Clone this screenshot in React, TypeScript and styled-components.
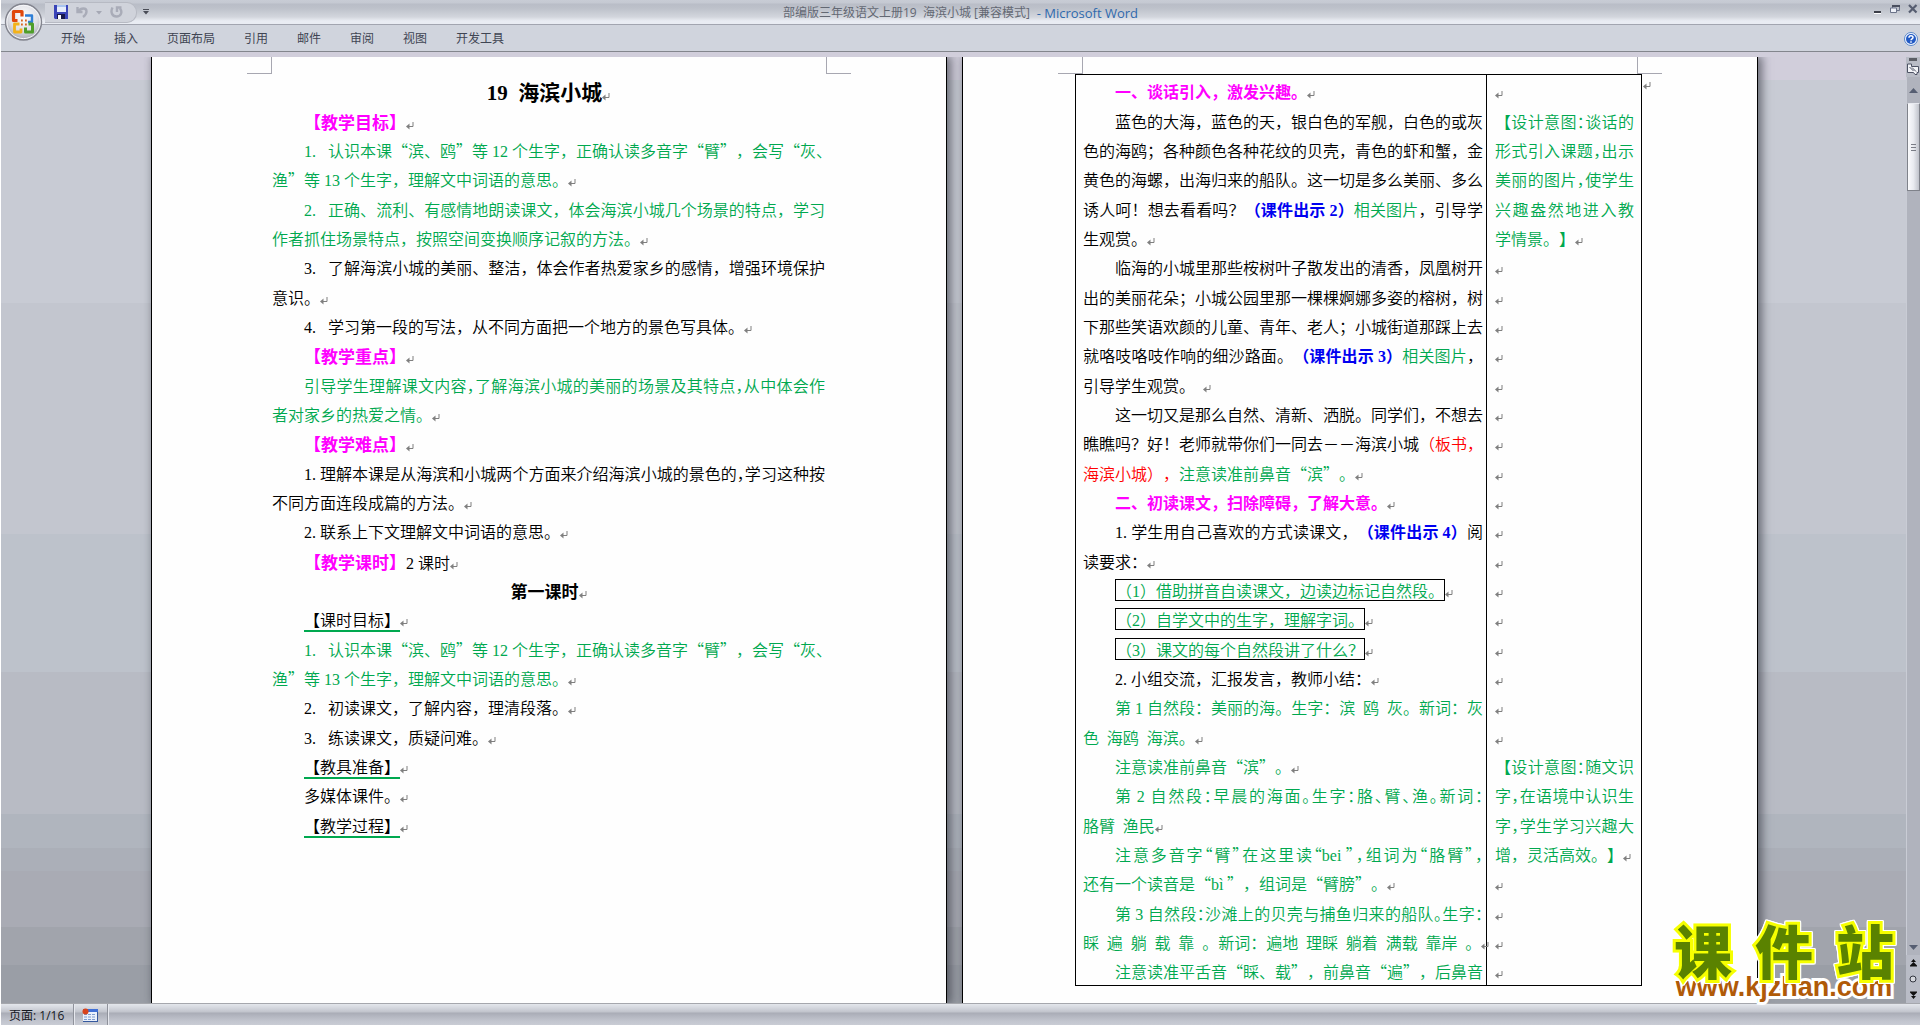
import React from "react";
import styled, { createGlobalStyle, css } from "styled-components";

const UI_FONT = '"Open Sans", "Noto Sans CJK SC", sans-serif';
const DOC_FONT = '"Noto Sans CJK SC DemiLight", "Noto Sans CJK SC Light", "Noto Sans CJK SC", sans-serif';

const GlobalStyle = createGlobalStyle`
  * { box-sizing: border-box; }
  body { margin: 0; background: #fff; }
  button { font: inherit; color: inherit; border: 0; padding: 0; background: none; cursor: pointer; }
`;

/* ---------- window frame ---------- */

const Window = styled.div`
  display: flex;
  flex-direction: column;
  min-height: 100vh;
  padding-left: 1px;
  font-family: ${UI_FONT};
  font-size: 12px;
  color: #3f4553;
`;

const TitleBar = styled.header`
  position: relative;
  display: grid;
  grid-template-columns: 1fr auto 1fr;
  align-items: center;
  height: 25px;
  padding: 0 2px;
  border-bottom: 1px solid #a2a5b0;
  background: linear-gradient(#c8ccd5 0, #c5c9d2 3px, #b9bdc7 4px, #bdc1ca 8px, #c6cad2 12px, #d3d6dd 17px, #dfe2e8 19px, #e9ecf3 21px, #e9ecf3 24px);
`;

const OfficeButton = styled.button`
  position: absolute;
  left: 3px;
  top: 2px;
  width: 39px;
  height: 40px;
  z-index: 2;
`;

const QuickAccess = styled.div`
  display: flex;
  align-items: center;
  gap: 8px;
  height: 21px;
  padding: 0 13px 0 9px;
  border-radius: 0 10px 10px 0;
  border: 1px solid #b7bac3;
  border-left: 0;
  background: #d0d3db;
`;

const BarGroup = styled.div`
  display: flex;
  align-items: center;
  gap: 6px;
  padding-left: 42px;
`;

const IconButton = styled.button`
  display: flex;
  align-items: center;
  justify-content: center;
`;

const DocTitle = styled.h1`
  display: flex;
  align-items: center;
  margin: 0;
  padding-top: 1px;
  font-size: 12px;
  font-weight: 400;
  line-height: 20px;
  white-space: pre;
  color: #636873;
`;

const AppName = styled.span`
  font-size: 13px;
  color: #2f69ad;
`;

const WindowControls = styled.div`
  display: flex;
  justify-content: flex-end;
  align-items: center;
  gap: 8px;
  padding-bottom: 6px;
`;

const Ribbon = styled.nav`
  display: flex;
  align-items: center;
  gap: 29px;
  height: 27px;
  padding: 1px 2px 0 60px;
  border-bottom: 1px solid #83868d;
  background: #d0d4dd;
`;

const Tab = styled.button`
  line-height: 24px;
  white-space: nowrap;
`;

const HelpButton = styled(IconButton)`
  margin-left: auto;
`;

const Strip = styled.div`
  height: 5px;
  background: #d1cedb;
`;

/* ---------- workspace ---------- */

const Workspace = styled.main`
  display: flex;
  flex: 1;
  background: linear-gradient(
    #d1cedb 2.4%, #c8cbd4 2.4% 26%, #c3c6cf 26% 50.4%, #bdc2cb 50.4% 65%,
    #b8bbc4 65% 80%, #b0b5be 80% 83.6%, #abafb8 83.6% 86%, #a9abb4 86% 92%,
    #a1a4ac 92% 96%, #9a9ea6 96%
  );
`;

const Pages = styled.div`
  display: flex;
  flex: 1;
  justify-content: center;
  gap: 15px;
  padding-left: 2px;
  overflow: hidden;
`;

const Page = styled.section`
  width: 796px;
  flex: none;
  background: #fefefe;
  border: solid #000;
  border-width: 0 1px;
  box-shadow: 3px 0 9px 1px rgba(40, 44, 54, 0.6);
`;

const Corners = styled.div`
  display: flex;
  justify-content: space-between;
  padding: 0 95px;
`;

const Corner = styled.span<{ $side: "left" | "right" }>`
  width: 25px;
  height: 17px;
  border: 0 solid #a7a7b1;
  border-bottom-width: 1px;
  ${(p) => (p.$side === "left" ? "border-right-width: 1px;" : "border-left-width: 1px;")}
`;

const Body = styled.div`
  padding: 1px 121px 0 120px;
`;

const tones = {
  black: "#000",
  green: "#00a84f",
  pink: "#ff00ff",
  blue: "#0000f0",
  red: "#ff0000",
};
type Tone = keyof typeof tones;

const Lines = styled.div`
  font-family: ${DOC_FONT};
  font-size: 16px;
  text-spacing-trim: space-all;
`;

const Line = styled.p<{ $indent?: boolean; $full?: boolean; $tight?: boolean; $center?: boolean }>`
  margin: 0;
  height: 29px;
  line-height: 33px;
  white-space: nowrap;
  padding-left: ${(p) => (p.$indent ? "32px" : "0")};
  ${(p) => p.$full && css`text-align: justify; text-align-last: justify;`}
  ${(p) => p.$tight && css`font-feature-settings: "halt";`}
  ${(p) => p.$center && css`text-align: center;`}
  &:nth-child(3n + 1) {
    height: 30px;
  }
`;

type RunProps = { $tone: Tone; $bold?: boolean; $size?: number; $underline?: boolean; $boxed?: boolean; $tight?: boolean };

const Run = styled.span<RunProps>`
  color: ${(p) => tones[p.$tone]};
  font-weight: ${(p) => (p.$bold ? 700 : 400)};
  ${(p) => p.$bold && css`font-family: "Noto Sans CJK SC", sans-serif;`}
  ${(p) => p.$size && css`font-size: ${p.$size}px;`}
  ${(p) => p.$tight && css`font-feature-settings: "halt";`}
  ${(p) => p.$underline && css`
    text-decoration: underline 2px #00a84f;
    text-underline-offset: 4px;
  `}
  ${(p) => p.$boxed && css`
    display: inline-block;
    height: 22px;
    line-height: 20px;
    border: 1px solid #000;
  `}
`;

const Latin = styled.span<{ $before: boolean; $after: boolean; $chars: number }>`
  display: inline-block;
  min-width: ${(p) => p.$chars / 2}em;
  margin: 0 ${(p) => (p.$after ? 4 : 0)}px 0 ${(p) => (p.$before ? 4 : 0)}px;
  font-family: "Liberation Serif", serif;
  line-height: 20px;
  text-align: left;
  text-align-last: left;
`;

const Space = styled.span`
  font-family: "Liberation Mono", monospace;
  font-size: 13px;
  white-space: pre;
`;

const MarkIcon = styled.svg`
  width: 8px;
  height: 8px;
  vertical-align: -1px;
`;

const DocTable = styled.table`
  flex: none;
  width: 567px;
  margin-left: -8px;
  border-collapse: collapse;
  table-layout: fixed;
  td {
    border: 1px solid #000;
    padding: 0 3px 0 7px;
    vertical-align: top;
  }
  td + td {
    width: 155px;
    padding-right: 7px;
    padding-left: 8px;
  }
`;

const TableRow = styled.div`
  display: flex;
  align-items: flex-start;
  gap: 1px;
`;

const RowEnd = styled.span`
  padding-top: 2px;
`;

const TableBody = styled(Body)`
  padding: 0 0 0 120px;
`;

/* ---------- scroll bar ---------- */

const ScrollColumn = styled.aside`
  display: flex;
  flex-direction: column;
  align-items: center;
  width: 14px;
  background: #b9bcc6;
`;

const ScrollTrack = styled.div`
  display: flex;
  flex-direction: column;
  align-items: center;
  align-self: stretch;
  flex: 1;
  background: #b0b3bd;
  border-left: 1px solid #c9ccd5;
`;

const Thumb = styled.div`
  display: flex;
  flex-direction: column;
  justify-content: center;
  gap: 2px;
  width: 13px;
  height: 88px;
  margin-bottom: auto;
  padding: 0 3px;
  border: 1px solid #7f828a;
  border-top-color: #e8eaf0;
  background: linear-gradient(90deg, #fbfbfd, #e9ebf0 50%, #c0c3cb);
`;

const Grip = styled.span`
  height: 1px;
  background: #7a7d86;
`;

const ScrollButton = styled(IconButton)<{ $h: number }>`
  width: 13px;
  height: ${(p) => p.$h}px;
`;

/* ---------- status bar ---------- */

const StatusBar = styled.footer`
  display: flex;
  align-items: stretch;
  height: 22px;
  border-top: 1px solid #a5a7ad;
  background: linear-gradient(#e3e6eb 0, #d3d6dd 4px, #c1c4cc 8px, #a9acb6 9px, #b3b6c0 12px, #c2c5ce 17px, #c9ccd4 21px);
  color: #15181f;
`;

const StatusItem = styled.button`
  display: flex;
  align-items: center;
  padding: 0 9px 0 8px;
  border-right: 1px solid #8f929b;
  box-shadow: 1px 0 #e6e8ee;
`;

const Watermark = styled.div`
  position: absolute;
  right: 20px;
  bottom: 26px;
  width: 232px;
  text-align: center;
  white-space: nowrap;
`;

const WatermarkName = styled.div`
  display: flex;
  justify-content: space-between;
  padding: 0 6px;
  font: 900 58px/54px "Noto Sans CJK SC", sans-serif;
  color: #5a8200;
  -webkit-text-stroke: 6px #f6ff00;
  paint-order: stroke fill;
  filter: drop-shadow(1px 0 #fff) drop-shadow(-1px 0 #fff) drop-shadow(0 1px #fff) drop-shadow(0 -1px #fff);
`;

const WatermarkLink = styled.a`
  display: block;
  font: 700 27px/23px "Liberation Sans", Arial, sans-serif;
  color: #b05a08;
  text-decoration: none;
  -webkit-text-stroke: 6px #fff;
  paint-order: stroke fill;
`;

/* ---------- document text ---------- */

type Piece = { t: string; tone?: Tone; bold?: boolean; size?: number; underline?: boolean; boxed?: boolean; tight?: boolean };
type LineData = { p: Piece[]; indent?: boolean; full?: boolean; tight?: boolean; center?: boolean; mark?: boolean };
type Options = Omit<LineData, "p">;

const IN = { indent: true };
const INF = { indent: true, full: true };
const INT = { indent: true, full: true, tight: true };
const F = { full: true };
const FT = { full: true, tight: true };
const END = { mark: true };
const INE = { indent: true, mark: true };

const line = (p: Piece[], o: Options = {}): LineData => ({ p, ...o });
const black = (t: string, o?: Options) => line([{ t }], o);
const green = (t: string, o?: Options) => line([{ t, tone: "green" }], o);
const heading = (t: string, size?: number) => line([{ t, tone: "pink", bold: true, size }], INE);
const section = (t: string) => line([{ t, underline: true }], INE);
const boxed = (t: string) => line([{ t, tone: "green", boxed: true }], INE);
const note = (rest: string) =>
  line([{ t: "【设计意图", tone: "green" }, { t: "：", tone: "green", tight: true }, { t: rest, tone: "green" }], F);

const firstPage: LineData[] = [
  line([{ t: "19 海滨小城", bold: true, size: 21 }], { center: true, mark: true }),
  heading("【教学目标】", 17),
  green("1. 认识本课“滨、鸥”等12个生字，正确认读多音字“臂”，会写“灰、", IN),
  green("渔”等13个生字，理解文中词语的意思。", END),
  green("2. 正确、流利、有感情地朗读课文，体会海滨小城几个场景的特点，学习", INF),
  green("作者抓住场景特点，按照空间变换顺序记叙的方法。", END),
  black("3. 了解海滨小城的美丽、整洁，体会作者热爱家乡的感情，增强环境保护", INF),
  black("意识。", END),
  black("4. 学习第一段的写法，从不同方面把一个地方的景色写具体。", INE),
  heading("【教学重点】", 17),
  green("引导学生理解课文内容，了解海滨小城的美丽的场景及其特点，从中体会作", INT),
  green("者对家乡的热爱之情。", END),
  heading("【教学难点】", 17),
  black("1.理解本课是从海滨和小城两个方面来介绍海滨小城的景色的，学习这种按", INT),
  black("不同方面连段成篇的方法。", END),
  black("2.联系上下文理解文中词语的意思。", INE),
  line([{ t: "【教学课时】", tone: "pink", bold: true, size: 17 }, { t: "2课时" }], INE),
  line([{ t: "第一课时", bold: true, size: 17 }], { center: true, mark: true }),
  section("【课时目标】"),
  green("1. 认识本课“滨、鸥”等12个生字，正确认读多音字“臂”，会写“灰、", IN),
  green("渔”等13个生字，理解文中词语的意思。", END),
  black("2. 初读课文，了解内容，理清段落。", INE),
  black("3. 练读课文，质疑问难。", INE),
  section("【教具准备】"),
  black("多媒体课件。", INE),
  section("【教学过程】"),
];

const secondPage: LineData[] = [
  heading("一、谈话引入，激发兴趣。"),
  black("蓝色的大海，蓝色的天，银白色的军舰，白色的或灰", INF),
  black("色的海鸥；各种颜色各种花纹的贝壳，青色的虾和蟹，金", F),
  black("黄色的海螺，出海归来的船队。这一切是多么美丽、多么", F),
  line([{ t: "诱人呵！想去看看吗？" }, { t: "（课件出示2）", tone: "blue", bold: true }, { t: "相关图片", tone: "green" }, { t: "，引导学" }], F),
  black("生观赏。", END),
  black("临海的小城里那些桉树叶子散发出的清香，凤凰树开", INF),
  black("出的美丽花朵；小城公园里那一棵棵婀娜多姿的榕树，树", F),
  black("下那些笑语欢颜的儿童、青年、老人；小城街道那踩上去", F),
  line([{ t: "就咯吱咯吱作响的细沙路面。" }, { t: "（课件出示3）", tone: "blue", bold: true }, { t: "相关图片", tone: "green" }, { t: "，" }], F),
  black("引导学生观赏。 ", END),
  black("这一切又是那么自然、清新、洒脱。同学们，不想去", INF),
  line([{ t: "瞧瞧吗？好！老师就带你们一同去－－海滨小城" }, { t: "（板书，", tone: "red" }], F),
  line([{ t: "海滨小城），", tone: "red" }, { t: "注意读准前鼻音“滨”。", tone: "green" }], END),
  heading("二、初读课文，扫除障碍，了解大意。"),
  line([{ t: "1.学生用自己喜欢的方式读课文，" }, { t: "（课件出示4）", tone: "blue", bold: true }, { t: "阅" }], INF),
  black("读要求：", END),
  boxed("（1）借助拼音自读课文，边读边标记自然段。"),
  boxed("（2）自学文中的生字，理解字词。"),
  boxed("（3）课文的每个自然段讲了什么？"),
  black("2.小组交流，汇报发言，教师小结：", INE),
  green("第1自然段：美丽的海。生字：滨 鸥 灰。新词：灰", INF),
  green("色 海鸥 海滨。", END),
  green("注意读准前鼻音“滨”。", INE),
  green("第2自然段：早晨的海面。生字：胳、臂、渔。新词：", INT),
  green("胳臂 渔民", END),
  green("注意多音字“臂”在这里读“bei”，组词为“胳臂”，", INT),
  green("还有一个读音是“bì”，组词是“臂膀”。", END),
  green("第3自然段：沙滩上的贝壳与捕鱼归来的船队。生字：", INT),
  green("睬 遍 躺 载 靠 。新词：遍地 理睬 躺着 满载 靠岸 。", END),
  green("注意读准平舌音“睬、载”，前鼻音“遍”，后鼻音", INF),
];

const blank = (n: number): LineData[] => Array.from({ length: n }, () => line([], END));

const notes: LineData[] = [
  ...blank(1),
  note("谈话的"),
  green("形式引入课题，出示", FT),
  green("美丽的图片，使学生", FT),
  green("兴趣盎然地进入教", F),
  green("学情景。】", END),
  ...blank(17),
  note("随文识"),
  green("字，在语境中认识生", FT),
  green("字，学生学习兴趣大", FT),
  green("增，灵活高效。】", END),
  ...blank(4),
];

const Mark = () => (
  <MarkIcon viewBox="0 0 8 8" aria-hidden="true">
    <path d="M7 0v4.5H2" fill="none" stroke="#7f7f7f" />
    <path d="M0 4.5 3.5 1.5v6z" fill="#7f7f7f" />
  </MarkIcon>
);

const isIdeograph = (c?: string) => !!c && /[\u4e00-\u9fff]/.test(c);

/* Splits a run into ideographs, half-width text and half-width spaces. */
function renderText(text: string) {
  const parts = text.split(/(\d\d? (?=海)|\d\. |[0-9A-Za-zì.]+| )/);
  return parts.map((part, i) => {
    if (!part) return null;
    if (part === " ") return <Space key={i}> </Space>;
    if (/^[0-9A-Za-zì.]/.test(part)) {
      const closed = /[. ]/.test(part);
      return (
        <Latin
          key={i}
          $chars={part.length}
          $before={isIdeograph(parts[i - 1]?.slice(-1))}
          $after={!closed && isIdeograph(parts[i + 1]?.[0])}
        >
          {part}
        </Latin>
      );
    }
    return <React.Fragment key={i}>{part}</React.Fragment>;
  });
}

const TextLines = ({ data }: { data: LineData[] }) => (
  <Lines>
    {data.map((l, i) => (
      <Line key={i} $indent={l.indent} $full={l.full} $tight={l.tight} $center={l.center}>
        {l.p.map((r, j) => (
          <Run
            key={j}
            $tone={r.tone ?? "black"}
            $bold={r.bold}
            $size={r.size}
            $underline={r.underline}
            $boxed={r.boxed}
            $tight={r.tight}
          >
            {renderText(r.t)}
          </Run>
        ))}
        {l.mark && <Mark />}
      </Line>
    ))}
  </Lines>
);

/* ---------- icons ---------- */

const OfficeLogo = () => (
  <svg width="39" height="40" viewBox="0 0 39 40" aria-hidden="true">
    <defs>
      <radialGradient id="orb" cx="0.5" cy="0.35" r="0.65">
        <stop offset="0" stopColor="#fff" />
        <stop offset="0.6" stopColor="#dfe0e6" />
        <stop offset="1" stopColor="#a4a6b0" />
      </radialGradient>
    </defs>
    <circle cx="19.5" cy="20" r="18" fill="url(#orb)" stroke="#83858f" strokeWidth="1.4" />
    <circle cx="19.5" cy="20" r="16.6" fill="none" stroke="#f6f7fa" strokeWidth="1" />
    <g fill="none" strokeLinejoin="round">
      <path d="M13.5 18.5H9.5V9.5h8.500v5" stroke="#e0480c" strokeWidth="3.200" />
      <path d="M21 13.500h7v6.500h-4" stroke="#2f7fd6" strokeWidth="2.400" />
      <path d="M15.500 22h-5v8h6.500v-3.500" stroke="#f3b21a" strokeWidth="2.800" />
      <path d="M24.500 22h4v8h-7v-4.500" stroke="#4f9e2a" strokeWidth="3" />
    </g>
    <path d="M17 18.500h1.800M21 18.500h1.800M17 22.500h1.800M21 22.500h1.800" stroke="#d8641c" strokeWidth="1.800" />
  </svg>
);

const SaveIcon = () => (
  <svg width="14" height="14" viewBox="0 0 14 14" aria-hidden="true">
    <path d="M0 0h14v14H1L0 13z" fill="#3a44b8" />
    <path d="M3 0h9v7H3z" fill="#e6edfb" />
    <path d="M3 0h9v2H3z" fill="#a9c4ef" />
    <path d="M3 9h8v5H3z" fill="#17184a" />
    <path d="M4 10h3v4H4z" fill="#fff" />
  </svg>
);

const UndoIcon = () => (
  <svg width="12" height="12" viewBox="0 0 12 12" aria-hidden="true">
    <path d="M1.500 1v5h5M2 5.500C5 1.500 10.500 1.500 10.500 5.500c0 2.500-1.500 4-3.500 5.500" fill="none" stroke="#a9acb8" strokeWidth="2.400" />
  </svg>
);

const RedoIcon = () => (
  <svg width="13" height="12" viewBox="0 0 13 12" aria-hidden="true">
    <path d="M2.500 1.500C0 6.500 2.500 10.500 6.500 10.500s6.500-4 3.500-8M11.500 1.500H7v4.500" fill="none" stroke="#a9acb8" strokeWidth="2.400" />
  </svg>
);

const Down = ({ color = "#4a4d57", bar = false }: { color?: string; bar?: boolean }) => (
  <svg width="6" height="6" viewBox="0 0 6 6" aria-hidden="true">
    {bar && <path d="M0 0h6v1H0z" fill={color} />}
    <path d="M0 2h6L3 5.500z" fill={color} />
  </svg>
);

const Chevron = ({ up = false }: { up?: boolean }) => (
  <svg width="9" height="5" viewBox="0 0 9 5" aria-hidden="true">
    <path d={up ? "M0 5 4.500 0 9 5z" : "M0 0 4.500 5 9 0z"} fill="#565e72" />
  </svg>
);

const DoubleArrow = ({ up = false }: { up?: boolean }) => (
  <svg width="7" height="8" viewBox="0 0 7 8" aria-hidden="true">
    <path
      d={up ? "M1 3 3.500 0 6 3zM0 6.500 3.500 3 7 6.500zM0 6.500h7v1H0z" : "M1 5 3.500 8 6 5zM0 1.500 3.500 5 7 1.500zM0 .5h7v1H0z"}
      fill="#111"
    />
  </svg>
);

export default function App() {
  return (
    <Window>
      <GlobalStyle />
      <TitleBar>
        <OfficeButton aria-label="Office">
          <OfficeLogo />
        </OfficeButton>
        <BarGroup>
          <QuickAccess>
            <IconButton aria-label="保存"><SaveIcon /></IconButton>
            <IconButton aria-label="撤消"><UndoIcon /></IconButton>
            <IconButton aria-label="撤消列表"><Down color="#a5a8b4" /></IconButton>
            <IconButton aria-label="重复"><RedoIcon /></IconButton>
          </QuickAccess>
          <IconButton aria-label="自定义快速访问工具栏"><Down bar /></IconButton>
        </BarGroup>
        <DocTitle>
          部编版三年级语文上册19  海滨小城 [兼容模式]<AppName>  - Microsoft Word</AppName>
        </DocTitle>
        <WindowControls>
          <IconButton aria-label="最小化">
            <svg width="8" height="10" viewBox="0 0 8 10"><path d="M0 7h7v2H0z" fill="#3c3f49" /><path d="M0 9h7v1H0z" fill="#fff" /></svg>
          </IconButton>
          <IconButton aria-label="还原">
            <svg width="10" height="9" viewBox="0 0 10 9">
              <path d="M2.500 1h7v4.500h-7z" fill="none" stroke="#6b7389" />
              <path d="M2 0h8v2H2z" fill="#4a4f5f" />
              <path d="M.5 3h6v4.500h-6z" fill="#eef1f8" stroke="#6b7389" />
            </svg>
          </IconButton>
          <IconButton aria-label="关闭">
            <svg width="10" height="10" viewBox="0 0 10 10"><path d="M1 1l7.500 7.500M8.500 1 1 8.500" stroke="#565d70" strokeWidth="2.200" /></svg>
          </IconButton>
        </WindowControls>
      </TitleBar>

      <Ribbon aria-label="功能区">
        {["开始", "插入", "页面布局", "引用", "邮件", "审阅", "视图", "开发工具"].map((t) => (
          <Tab key={t}>{t}</Tab>
        ))}
        <HelpButton aria-label="帮助">
          <svg width="14" height="14" viewBox="0 0 14 14">
            <circle cx="7" cy="7" r="6.500" fill="#f4f8ff" stroke="#5a86c8" />
            <circle cx="7" cy="7" r="5" fill="#2159c4" />
            <path d="M5 5.700C5 3.200 9 3.200 9 5.500 9 7 7 6.800 7 8.300M7 9.200v1.500" fill="none" stroke="#fff" strokeWidth="1.500" />
          </svg>
        </HelpButton>
      </Ribbon>
      <Strip />

      <Workspace>
        <Pages>
          <Page>
            <Corners><Corner $side="left" /><Corner $side="right" /></Corners>
            <Body><TextLines data={firstPage} /></Body>
          </Page>
          <Page>
            <Corners><Corner $side="left" /><Corner $side="right" /></Corners>
            <TableBody>
              <TableRow>
                <DocTable>
                  <colgroup>
                    <col />
                    <col width="155" />
                  </colgroup>
                  <tbody>
                    <tr>
                      <td><TextLines data={secondPage} /></td>
                      <td><TextLines data={notes} /></td>
                    </tr>
                  </tbody>
                </DocTable>
                <RowEnd><Mark /></RowEnd>
              </TableRow>
            </TableBody>
          </Page>
        </Pages>
        <ScrollColumn>
          <ScrollButton $h={4} aria-label="拆分">
            <svg width="8" height="3"><path d="M0 0h8v3H0z" fill="#5c5e66" /></svg>
          </ScrollButton>
          <ScrollButton $h={16} aria-label="标尺">
            <svg width="12" height="12" viewBox="0 0 12 12">
              <path d="M.5 3V1h4v2.500h7v6H10v2H8l-1.500-2h-6z" fill="#f3f4f8" stroke="#4d5264" />
              <path d="m2.500 4 4 4M5 4.500l4 4" stroke="#4d5264" />
            </svg>
          </ScrollButton>
          <ScrollTrack>
            <ScrollButton $h={26} aria-label="向上滚动"><Chevron up /></ScrollButton>
            <Thumb><Grip /><Grip /><Grip /></Thumb>
            <ScrollButton $h={16} aria-label="向下滚动"><Chevron /></ScrollButton>
          </ScrollTrack>
          <ScrollButton $h={16} aria-label="前一页"><DoubleArrow up /></ScrollButton>
          <ScrollButton $h={16} aria-label="选择浏览对象">
            <svg width="8" height="8"><circle cx="4" cy="4" r="3" fill="#d5d7dd" stroke="#33363f" /></svg>
          </ScrollButton>
          <ScrollButton $h={16} aria-label="下一页"><DoubleArrow /></ScrollButton>
        </ScrollColumn>
      </Workspace>

      <StatusBar>
        <StatusItem>页面: 1/16</StatusItem>
        <StatusItem aria-label="宏">
          <svg width="16" height="14" viewBox="0 0 16 14">
            <path d="M1 1h15v13H1z" fill="#e9f0fb" />
            <path d="M1 1h15v3H1z" fill="#3f6fd6" />
            <path d="M2 6.500h12M2 9h12M2 11.500h12" stroke="#7e9cd0" strokeDasharray="3 1" />
            <path d="M15 4h1v10H1v-1h14z" fill="#35589e" />
            <circle cx="3.500" cy="3.500" r="3" fill="#d8431c" />
          </svg>
        </StatusItem>
      </StatusBar>

      <Watermark>
        <WatermarkName><span>课</span><span>件</span><span>站</span></WatermarkName>
        <WatermarkLink href="#">www.kjzhan.com</WatermarkLink>
      </Watermark>
    </Window>
  );
}
